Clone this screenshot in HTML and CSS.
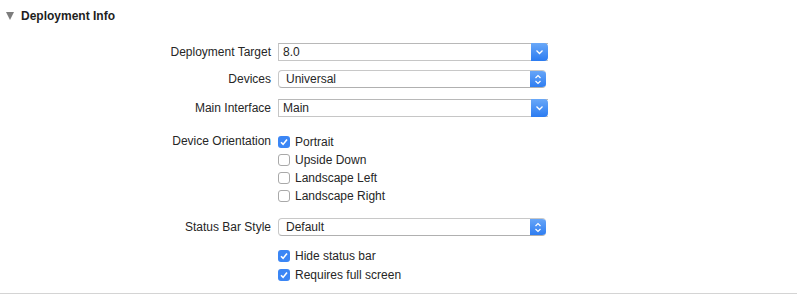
FILE: index.html
```html
<!DOCTYPE html>
<html lang="en">
<head>
  <meta charset="UTF-8">
  <title>Deployment Info</title>
  <link rel="stylesheet" href="styles.css">
</head>
<body>
  <div class="section">
    <div class="section-head">
      <span class="disclosure"></span>
      <h2>Deployment Info</h2>
    </div>

    <div class="form">
      <label class="row-label">Deployment Target</label>
      <div class="combo">
        <span class="combo-text">8.0</span>
        <span class="combo-btn">
          <svg width="9" height="6" viewBox="0 0 9 6"><path d="M1.5 1.5 L4.5 4.5 L7.5 1.5" fill="none" stroke="#fff" stroke-width="1.3"/></svg>
        </span>
      </div>

      <label class="row-label gap-9">Devices</label>
      <div class="popup gap-9">
        <span class="popup-text">Universal</span>
        <span class="popup-btn">
          <svg width="8" height="11" viewBox="0 0 8 11"><path d="M1.5 4 L4 1.5 L6.5 4 M1.5 7 L4 9.5 L6.5 7" fill="none" stroke="#fff" stroke-width="1.2"/></svg>
        </span>
      </div>

      <label class="row-label gap-11">Main Interface</label>
      <div class="combo gap-11">
        <span class="combo-text">Main</span>
        <span class="combo-btn">
          <svg width="9" height="6" viewBox="0 0 9 6"><path d="M1.5 1.5 L4.5 4.5 L7.5 1.5" fill="none" stroke="#fff" stroke-width="1.3"/></svg>
        </span>
      </div>

      <label class="row-label check-label gap-18">Device Orientation</label>
      <div class="checks gap-18">
        <div class="check"><span class="box on"></span>Portrait</div>
        <div class="check"><span class="box"></span>Upside Down</div>
        <div class="check"><span class="box"></span>Landscape Left</div>
        <div class="check"><span class="box"></span>Landscape Right</div>
      </div>

      <label class="row-label gap-16">Status Bar Style</label>
      <div class="popup gap-16">
        <span class="popup-text">Default</span>
        <span class="popup-btn">
          <svg width="8" height="11" viewBox="0 0 8 11"><path d="M1.5 4 L4 1.5 L6.5 4 M1.5 7 L4 9.5 L6.5 7" fill="none" stroke="#fff" stroke-width="1.2"/></svg>
        </span>
      </div>

      <span></span>
      <div class="checks loose gap-13">
        <div class="check"><span class="box on"></span>Hide status bar</div>
        <div class="check"><span class="box on"></span>Requires full screen</div>
      </div>
    </div>
  </div>
</body>
</html>
```

FILE: styles.css
```css
body {
  margin: 0;
  background: #fff;
  font-family: "Liberation Sans", Arial, sans-serif;
  font-size: 12px;
  color: #262626;
}

.section {
  border-bottom: 1px solid #d4d4d4;
  padding-bottom: 12px;
}

.section-head {
  display: flex;
  align-items: center;
  height: 32px;
  padding-left: 6px;
}

.disclosure {
  width: 0;
  height: 0;
  border-left: 4px solid transparent;
  border-right: 4px solid transparent;
  border-top: 8px solid #7d7d7d;
  margin-right: 7px;
}

h2 {
  margin: 0;
  font-size: 12px;
  font-weight: bold;
  color: #1e1e1e;
}

.form {
  display: grid;
  grid-template-columns: 271px 270px;
  column-gap: 7px;
  align-items: start;
  margin-top: 11px;
}

.row-label {
  text-align: right;
  line-height: 18px;
}

.row-label.check-label {
  line-height: 13px;
}

.gap-9 { margin-top: 9px; }
.gap-11 { margin-top: 11px; }
.gap-13 { margin-top: 13px; }
.gap-16 { margin-top: 16px; }
.gap-18 { margin-top: 18px; }

.combo {
  display: flex;
  height: 18px;
  box-sizing: border-box;
  border: 1px solid #c6c6c6;
  border-top-color: #b8b8b8;
  border-right: none;
}

.combo-text {
  flex: 1;
  padding-left: 4px;
  line-height: 16px;
}

.combo-btn {
  width: 17px;
  margin: -1px 0;
  display: flex;
  align-items: center;
  justify-content: center;
  background: linear-gradient(#6aa8f8, #2b7bf1);
  border-radius: 0 4px 4px 0;
}

.popup {
  display: flex;
  height: 18px;
  width: 268px;
  box-sizing: border-box;
  border: 1px solid #c8c8c8;
  border-bottom-color: #b0b0b0;
  border-right: none;
  border-radius: 4px;
  overflow: hidden;
}

.popup-text {
  flex: 1;
  padding-left: 7px;
  line-height: 16px;
}

.popup-btn {
  width: 16px;
  margin: -1px 0;
  display: flex;
  align-items: center;
  justify-content: center;
  background: linear-gradient(#6aa8f8, #2b7bf1);
}

.checks {
  display: flex;
  flex-direction: column;
  gap: 5px;
}

.checks.loose {
  gap: 6px;
}

.check {
  display: flex;
  align-items: center;
  height: 13px;
}

.box {
  width: 12px;
  height: 12px;
  box-sizing: border-box;
  border: 1px solid #a9a9a9;
  border-radius: 3px;
  margin-right: 5px;
  background: #fff;
}

.box.on {
  border: none;
  background: #3b86f5 url("data:image/svg+xml,%3Csvg xmlns='http://www.w3.org/2000/svg' width='12' height='12'%3E%3Cpath d='M3 6.2 L5.1 8.4 L9 3.4' fill='none' stroke='white' stroke-width='1.6'/%3E%3C/svg%3E") no-repeat center;
}
```
